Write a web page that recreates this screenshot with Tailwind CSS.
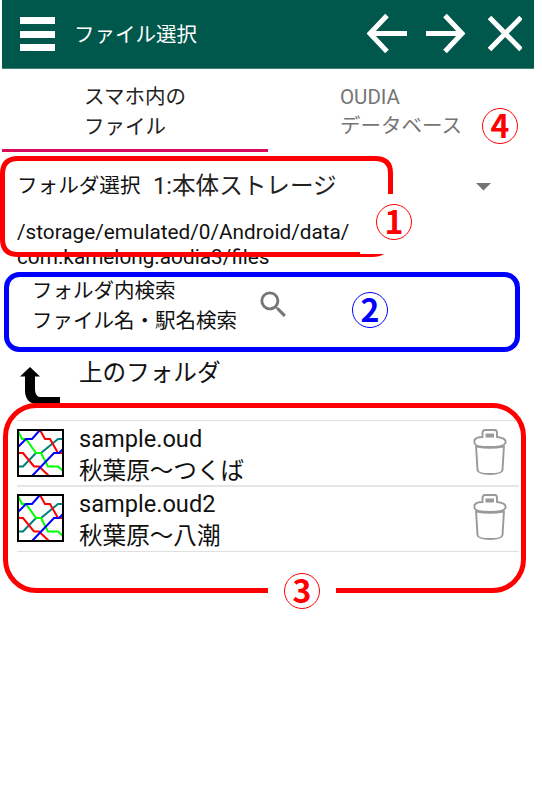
<!DOCTYPE html>
<html lang="ja">
<head>
<meta charset="utf-8">
<title>ファイル選択</title>
<script src="https://cdn.jsdelivr.net/npm/@tailwindcss/browser@4"></script>
</head>
<body class="bg-white">
<div class="relative w-[542px] h-[785px] overflow-hidden bg-white font-['Roboto','Noto_Sans_CJK_JP',sans-serif] text-[#111] whitespace-nowrap">
  <header class="ml-[2px] w-[532px] h-[69px] bg-[#00574b] border-b border-[#408177] flex items-center text-white">
    <div class="ml-[18px] w-[35px] flex flex-col gap-[6.5px]">
      <div class="h-[7px] bg-white"></div><div class="h-[7px] bg-white"></div><div class="h-[7px] bg-white"></div>
    </div>
    <h1 class="ml-[19px] pb-[2px] text-[20.5px] leading-[30px] font-['Noto_Sans_CJK_JP',sans-serif] font-normal">ファイル選択</h1>
    <svg class="ml-auto mr-[12px]" width="156" height="42" fill="none" stroke="#fff" stroke-width="5">
      <path d="M21 2.500L4 20.500L21 38.500M4 20.500H41M60 20.500H97M79 2.500L96 20.500L79 38.500M123.500 4.500L155 36.500M155 4.500L123.500 36.500"/>
    </svg>
  </header>

  <nav class="ml-[2px] w-[532px] h-[83px] grid grid-cols-2 font-['Noto_Sans_CJK_JP',sans-serif] text-[20.5px] leading-[30px]">
    <div class="border-b-[3px] border-[#d9095b] pt-[11px] pl-[82px] text-[#222]">スマホ内の<br>ファイル</div>
    <div class="pt-[12px] pl-[72px] text-[#757575]"><span class="block h-[30px] font-['Roboto'] leading-[32px]">OUDIA</span><span class="block leading-[27px]">データベース</span></div>
  </nav>

  <section class="pl-[17px] h-[119px]">
    <div class="flex items-center h-[67px] w-[474px] pt-[2px]">
      <span class="text-[20.6px] w-[136px]">フォルダ選択</span>
      <span class="text-[23.6px] text-[#222]">1:本体ストレージ</span>
      <svg class="ml-auto" width="15" height="8"><path d="M0 0H15L7.500 7.500Z" fill="#757575"/></svg>
    </div>
    <p class="text-[20.75px] leading-[25px] pt-px">/storage/emulated/0/Android/data/<br>com.kamelong.aodia3/files</p>
  </section>

  <section class="h-[79px] pl-[32px] pt-[3px] flex text-[20.5px] leading-[30px] font-['Noto_Sans_CJK_JP',sans-serif]">
    <div>フォルダ内検索<br>ファイル名・駅名検索</div>
    <svg class="ml-[19px] mt-[13px]" width="35" height="35" viewBox="0 0 24 24" fill="#757575"><path d="M15.500 14h-.79l-.28-.27A6.470 6.470 0 0 0 16 9.500 6.500 6.500 0 1 0 9.500 16c1.610 0 3.090-.59 4.230-1.570l.27.28v.79l5 4.990L20.490 19l-4.990-5zm-6 0C7.010 14 5 11.990 5 9.500S7.010 5 9.500 5 14 7.010 14 9.500 11.990 14 9.500 14z"/></svg>
  </section>

  <div class="h-[69px] pl-[20px] pt-[3px] flex">
    <svg class="mt-[14px]" width="40" height="37"><path d="M10 0L20 9.500H15V23Q15.500 29.500 20 30H40V37H16Q5.500 36 5 24V9.500H0Z" fill="#000"/></svg>
    <span class="ml-[19px] text-[23.6px] leading-[36px] font-['Noto_Sans_CJK_JP',sans-serif]">上のフォルダ</span>
  </div>

  <ul class="ml-[17px] w-[502px] text-[23.6px]">
    <li class="h-[67px] border-t border-[#dfdfdf] border-b-2 border-b-[#e6e6e6] mt-px flex">
      <svg class="mt-[8px]" width="47" height="48" viewBox="0 0 47 48" fill="none" stroke-width="2">
        <g id="diagram"><rect x="1" y="1" width="45" height="46" fill="#fff"/>
        <path d="M1 37.500H6L19 24H24L41 10H46" stroke="#008080"/>
        <path d="M1 2L5 10H9L19 24H24L31 37.500H41L46 42" stroke="#0f0"/>
        <path d="M23 1L28 10H33L41 24H46M1 24H6L17 37.500H22L32 47" stroke="#f00"/>
        <path d="M1 18L9 10H15L23 1M15 47L37 24H42L46 20" stroke="#00f"/>
        <rect x="1" y="1" width="45" height="46" stroke="#000"/></g>
      </svg>
      <div class="ml-[15px] pt-[3px] leading-[30px]"><span class="block">sample.oud</span><span class="block font-['Noto_Sans_CJK_JP',sans-serif]">秋葉原～つくば</span></div>
      <svg class="ml-auto mr-[12px] mt-[7px]" width="34" height="48" fill="none" stroke="#999" stroke-width="1.900">
        <g id="trash"><path d="M9.500 9V5Q9.500 2 12 2H22Q24 2 24 5V9Q32 10 32.500 13V15Q31 19 17 19Q2 19 1.500 15V12Q3 9 9.500 9Z"/>
        <path d="M3 17.500L4.500 42Q5 46 17 46Q29 46 29.500 42L31 17.500M3.500 18.500Q17 21 30.500 18.500"/><path d="M12.500 6.500H21M12.500 8.500H21" stroke-width="2"/></g>
      </svg>
    </li>
    <li class="h-[65px] border-b border-[#dfdfdf] flex">
      <svg class="mt-[7px]" width="47" height="48" viewBox="0 0 47 48" fill="none" stroke-width="2"><use href="#diagram"/></svg>
      <div class="ml-[15px] pt-[2px] leading-[30px]"><span class="block">sample.oud2</span><span class="block font-['Noto_Sans_CJK_JP',sans-serif]">秋葉原～八潮</span></div>
      <svg class="ml-auto mr-[12px] mt-[6px]" width="34" height="48" fill="none" stroke="#999" stroke-width="1.900"><use href="#trash"/></svg>
    </li>
  </ul>

  <svg class="absolute left-0 top-0" width="542" height="785" fill="none" stroke-width="5">
    <path d="M390.500 194V173Q390.500 158.500 375 158.500H18Q2.500 158.500 2.500 174V239Q2.500 254.500 18 254.500H360" stroke="#f00"/>
    <path d="M360 254H384Q380 257 372 257H360Z" fill="#f00" stroke="none"/>
    <rect x="6.500" y="274.500" width="511" height="75" rx="13" stroke="#00f"/>
    <path d="M268 590.500H36.500A31 31 0 0 1 5.500 559.500V436.500A31 31 0 0 1 36.500 405.500H492.500A31 31 0 0 1 523.500 436.500V559.500A31 31 0 0 1 492.500 590.500H336" stroke="#f00"/>
  </svg>
  <div class="absolute left-[376px] top-[204px] size-[36px] rounded-full border border-[#f00] text-[#f00] flex items-center justify-center font-bold text-[32px] pb-[4px] leading-[34px] font-['Noto_Sans_CJK_JP',sans-serif]">1</div>
  <div class="absolute left-[352px] top-[292px] size-[36px] rounded-full border border-[#00f] text-[#00f] flex items-center justify-center font-bold text-[32px] pb-[4px] leading-[34px] font-['Noto_Sans_CJK_JP',sans-serif]">2</div>
  <div class="absolute left-[284px] top-[573px] size-[36px] rounded-full border border-[#f00] text-[#f00] flex items-center justify-center font-bold text-[32px] pb-[4px] leading-[34px] font-['Noto_Sans_CJK_JP',sans-serif]">3</div>
  <div class="absolute left-[482px] top-[108px] size-[36px] rounded-full border border-[#f00] text-[#f00] flex items-center justify-center font-bold text-[32px] pb-[4px] leading-[34px] font-['Noto_Sans_CJK_JP',sans-serif]">4</div>
</div>
</body>
</html>
